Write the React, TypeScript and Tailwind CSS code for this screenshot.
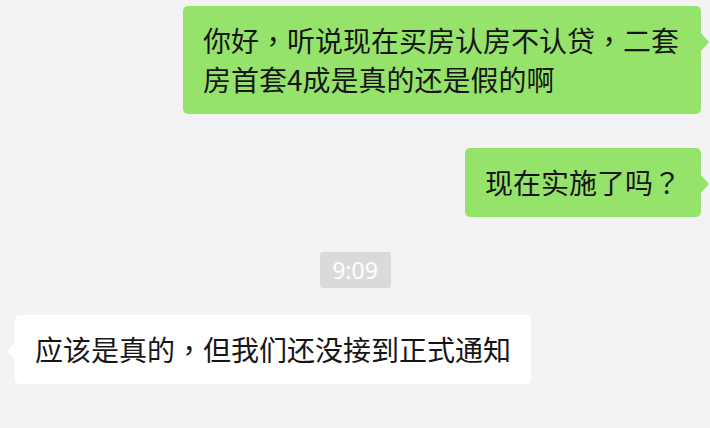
import React from "react";

const font = { fontFamily: '"Noto Sans CJK SC", "Noto Sans", sans-serif' };
const punct = { fontFamily: '"Noto Sans CJK TC", "Noto Sans CJK SC", sans-serif' };

function P({ c }: { c: string }) {
  return <span style={punct}>{c}</span>;
}

function RightBubble({ children }: { children: React.ReactNode }) {
  return (
    <div className="flex justify-end pr-[9px]">
      <div className="relative max-w-[518px] rounded-[5px] bg-[#95e36a] px-[20px] py-[15px] text-[28px] leading-[39px] text-[#161616]">
        {children}
        <span className="absolute right-[-8px] top-[27px] h-0 w-0 border-y-[9px] border-l-[8px] border-y-transparent border-l-[#95e36a]" />
      </div>
    </div>
  );
}

export default function App() {
  return (
    <div className="h-[428px] w-[710px] overflow-hidden bg-[#f3f3f5]" style={font}>
      <div className="flex flex-col pt-[6px]">
        <RightBubble>
          你好<P c="，" />听说现在买房认房不认贷<P c="，" />二套房首套4成是真的还是假的啊
        </RightBubble>
        <div className="h-[34px]" />
        <RightBubble>
          现在实施了吗<P c="？" />
        </RightBubble>
        <div className="h-[35px]" />
        <div className="flex justify-center">
          <div
            className="flex h-[36px] w-[71px] items-center justify-center rounded-[3px] bg-[#dadada] text-[23px] text-white"
            style={{ fontFamily: '"Noto Sans", "Liberation Sans", sans-serif' }}
          >
            9:09
          </div>
        </div>
        <div className="h-[27px]" />
        <div className="flex justify-start pl-[15px]">
          <div className="relative max-w-[518px] rounded-[5px] bg-white px-[20px] py-[15px] text-[28px] leading-[39px] text-[#161616]">
            应该是真的<P c="，" />但我们还没接到正式通知
            <span className="absolute left-[-8px] top-[27px] h-0 w-0 border-y-[9px] border-r-[8px] border-y-transparent border-r-white" />
          </div>
        </div>
      </div>
    </div>
  );
}
